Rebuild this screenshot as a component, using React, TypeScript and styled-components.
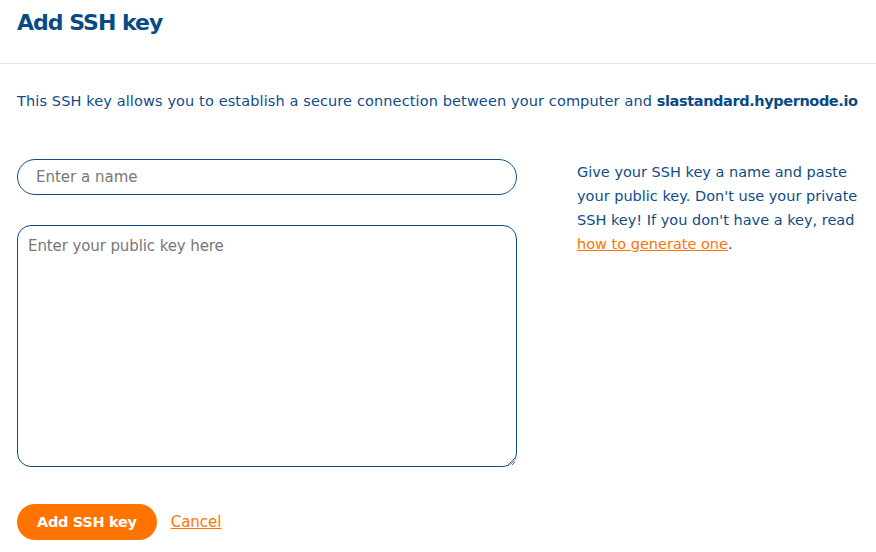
import styled, { createGlobalStyle } from "styled-components";

const GlobalStyle = createGlobalStyle`
  body {
    margin: 0;
    background: #fff;
    font-family: "DejaVu Sans", "Open Sans", sans-serif;
    color: #0f4c88;
  }
  * { box-sizing: border-box; }
`;

const Page = styled.div`
  width: 876px;
`;

const Header = styled.div`
  padding: 8px 17px 0;
  height: 64px;
  border-bottom: 1px solid #d9e7f3;
`;

const Title = styled.h1`
  margin: 0;
  font-size: 22px;
  font-weight: 700;
  letter-spacing: -1px;
  color: #0a4a84;
  line-height: 30px;
`;

const Intro = styled.p`
  margin: 0;
  padding: 27px 0 0 17px;
  font-size: 14.5px;
  line-height: 20px;
  letter-spacing: 0.12px;
  white-space: nowrap;
  color: #0f4c88;

  & > strong {
    font-weight: 700;
    color: #0a4a84;
    letter-spacing: -0.4px;
  }
`;

const Body = styled.div`
  display: grid;
  grid-template-columns: 500px 288px;
  column-gap: 60px;
  padding: 48px 17px 0;
`;

const Fields = styled.div`
  display: flex;
  flex-direction: column;
  gap: 30px;
`;

const NameInput = styled.input`
  width: 500px;
  height: 36px;
  border: 1px solid #0d4c8a;
  border-radius: 18px;
  padding: 0 18px;
  font-family: inherit;
  font-size: 15px;
  color: #333;
  outline: none;

  &::placeholder {
    color: #777;
  }
`;

const KeyInput = styled.textarea`
  width: 500px;
  height: 242px;
  border: 1px solid #0d4c8a;
  border-radius: 14px;
  padding: 11px 10px;
  font-family: inherit;
  font-size: 15px;
  letter-spacing: -0.1px;
  color: #333;
  outline: none;
  resize: vertical;

  &::placeholder {
    color: #777;
  }
`;

const Hint = styled.p`
  margin: 0;
  padding-top: 1px;
  font-size: 14.5px;
  line-height: 24px;
  color: #0f4c88;
`;

const Link = styled.a`
  color: #ff7400;
  text-decoration: underline;
  cursor: pointer;
`;

const Actions = styled.div`
  display: flex;
  align-items: center;
  gap: 14px;
  padding: 37px 17px 0;
`;

const PrimaryButton = styled.button`
  height: 36px;
  padding: 0 20px;
  border: none;
  border-radius: 18px;
  background: #ff7400;
  color: #fff;
  font-family: inherit;
  font-size: 14.5px;
  font-weight: 700;
  letter-spacing: -0.3px;
  cursor: pointer;
`;

const CancelLink = styled(Link)`
  font-size: 15px;
`;

export default function App() {
  return (
    <Page>
      <GlobalStyle />
      <Header>
        <Title>Add SSH key</Title>
      </Header>
      <Intro>
        This SSH key allows you to establish a secure connection between your computer and{" "}
        <strong>slastandard.hypernode.io</strong>
      </Intro>
      <Body>
        <Fields>
          <NameInput placeholder="Enter a name" />
          <KeyInput placeholder="Enter your public key here" />
        </Fields>
        <Hint>
          Give your SSH key a name and paste your public key. Don't use your private SSH key! If
          you don't have a key, read <Link>how to generate one</Link>.
        </Hint>
      </Body>
      <Actions>
        <PrimaryButton>Add SSH key</PrimaryButton>
        <CancelLink>Cancel</CancelLink>
      </Actions>
    </Page>
  );
}
